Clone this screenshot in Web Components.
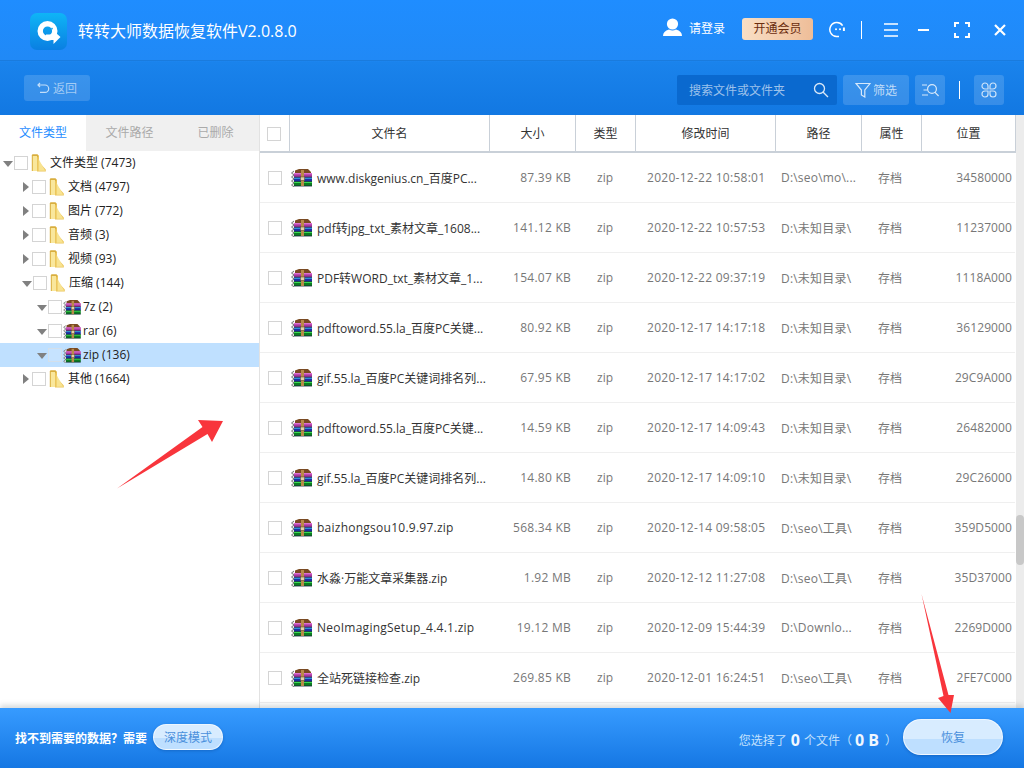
<!DOCTYPE html>
<html lang="zh">
<head>
<meta charset="utf-8">
<title>转转大师数据恢复软件</title>
<style>
    html, body {
        margin: 0;
        height: 100%;
        overflow: hidden;
    }

    body {
        font: 12px "Open Sans", "Noto Sans CJK SC", sans-serif;
        color: #333;
    }

    app-window {
        width: 1024px;
        height: 768px;
    }
</style>
</head>
<body>
<app-window>
    <app-header slot="header"></app-header>
    <side-tree slot="side"></side-tree>
    <file-table slot="main"></file-table>
    <app-footer slot="footer"></app-footer>
</app-window>

<script>
const rarIcon = (w = 21, h = 18) => `<svg width="${w}" height="${h}" viewBox="0 0 21 18" style="display:block;flex:none">
    <path d="M4 1.5 L8 0 H17 L20 3 V5 H4Z" fill="#7a4a22"/>
    <rect x="3" y="4" width="18" height="4.4" fill="#a8389f"/>
    <rect x="3" y="4" width="18" height="1.4" fill="#de6fd2"/>
    <rect x="3" y="8.4" width="18" height="4.2" fill="#1b2fa8"/>
    <rect x="3" y="8.4" width="18" height="1.3" fill="#3fb4ee"/>
    <rect x="3" y="12.6" width="18" height="4.4" fill="#0c7c20"/>
    <rect x="3" y="12.6" width="18" height="1.4" fill="#3bd850"/>
    <path d="M3 8.2H21M3 12.4H21M3 17H21" stroke="#10203a" stroke-width=".8"/>
    <path d="M3 2 L0.5 4 L3 6 L0.5 8 L3 10 L0.5 12 L3 14 L0.5 16 L3 18" fill="#e8e8e8" stroke="#555" stroke-width=".8"/>
    <rect x="10" y="1" width="3" height="16" fill="#b98a4a"/>
    <rect x="9.5" y="8" width="4" height="3.4" fill="#e4d2a8" stroke="#5a4020" stroke-width=".5"/>
</svg>`;

const folderIcon = `<svg width="15" height="18" viewBox="0 0 15 18" style="display:block;flex:none">
    <path d="M.8 1.5 Q.8 .3 2 .3 H6.5 L8 2 V17 H.8Z" fill="#d9ae3f"/>
    <path d="M1.8 2 H6 V17 H1.8Z" fill="#f9e79c"/>
    <path d="M6 3.5 L8 1.5 V8 L14.8 15.5 V17.5 H6Z" fill="#ecc65c"/>
    <path d="M7.6 5 L14.2 16.8 H7.6Z" fill="#f8e391"/>
</svg>`;

const checkStyle = `
    .check {
        box-sizing: border-box;
        width: 14px;
        height: 14px;
        flex: none;
        background: #fff;
        border: 1px solid #d4d4d4;
    }
`;

const headerTemplate = document.createElement('template');
headerTemplate.innerHTML = `
    <style>
        :host {
            display: block;
            height: 115px;
            color: #fff;
            background: linear-gradient(#1f8dff, #2089f6 60px, #1a83ec 62px, #1278e2);
        }

        svg {
            display: block;
            flex: none;
        }

        .title-bar {
            box-sizing: border-box;
            height: 61px;
            padding: 13px 18px 0 30px;
            display: flex;
            align-items: flex-start;
            border-bottom: 1px solid #1a7bdd;
        }

        .logo {
            width: 37px;
            height: 37px;
            border-radius: 7px;
            background: linear-gradient(#0fb5f6, #0a7fe2);
        }

        .title {
            margin: 7px auto 0 11px;
            font-size: 16px;
            line-height: 22px;
        }

        .login {
            display: flex;
            align-items: center;
            gap: 7px;
            margin: 5px 17px 0 0;
            height: 20px;
        }

        .login svg {
            margin-top: -3px;
        }

        .vip {
            width: 71px;
            height: 22px;
            margin: 5px 15px 0 0;
            text-align: center;
            line-height: 22px;
            color: #6a2c0e;
            border-radius: 3px;
            background: linear-gradient(90deg, #f9dfc5, #eebd98);
        }

        .sep {
            width: 1px;
            height: 18px;
            background: #fff;
            flex: none;
        }

        .tools {
            display: flex;
            align-items: center;
            height: 20px;
            margin-top: 7px;
        }

        .tool-bar {
            box-sizing: border-box;
            height: 54px;
            padding: 14px 20px 0 24px;
            display: flex;
            align-items: flex-start;
        }

        .back {
            box-sizing: border-box;
            width: 66px;
            height: 26px;
            margin-right: auto;
            display: flex;
            align-items: center;
            justify-content: center;
            gap: 3px;
            border-radius: 3px;
            background: rgba(255, 255, 255, .15);
            color: rgba(255, 255, 255, .55);
        }

        .search {
            box-sizing: border-box;
            width: 160px;
            height: 30px;
            padding: 0 8px 0 12px;
            display: flex;
            align-items: center;
            justify-content: space-between;
            border-radius: 2px;
            background: #0a69cf;
            color: rgba(255, 255, 255, .6);
        }

        .btn {
            box-sizing: border-box;
            height: 30px;
            margin-left: 6px;
            display: flex;
            align-items: center;
            justify-content: center;
            gap: 2px;
            border-radius: 3px;
            background: rgba(255, 255, 255, .15);
            color: rgba(255, 255, 255, .7);
        }

        .tool-sep {
            width: 1px;
            height: 18px;
            margin: 6px 14px 0 14px;
            background: #fff;
        }
    </style>
    <div class="title-bar">
        <div class="logo">
            <svg width="37" height="37" viewBox="0 0 37 37">
                <circle cx="17.5" cy="18" r="7.3" fill="none" stroke="#fff" stroke-width="5.4"/>
                <path d="M16 21.5 H22 V16.5 L30.5 24 L23.5 31 V27 H16Z" fill="#fff"/>
                <path d="M21.5 16.2 L22.5 15" stroke="#18a0ee" stroke-width="1.4"/>
            </svg>
        </div>
        <div class="title">转转大师数据恢复软件V2.0.8.0</div>
        <div class="login">
            <svg width="19" height="18" viewBox="0 0 19 18" fill="#fff">
                <circle cx="9.5" cy="6" r="5.6"/>
                <path d="M0 18 Q0 13 6 11.5 Q9.5 13.5 13 11.5 Q19 13 19 18Z"/>
            </svg>
            <span>请登录</span>
        </div>
        <div class="vip">开通会员</div>
        <div class="tools">
            <svg width="18" height="18" viewBox="0 0 18 18" fill="none" stroke="#fff" stroke-width="1.5" style="margin-right:15px">
                <path d="M14.6 4.6 A7 7 0 1 0 8.5 15.6 H11"/>
                <path d="M15.9 6.5 V10" stroke-width="2"/>
                <circle cx="8" cy="8.3" r="1" fill="#fff" stroke="none"/>
                <circle cx="12" cy="8.3" r="1" fill="#fff" stroke="none"/>
            </svg>
            <div class="sep"></div>
            <svg width="14" height="14" viewBox="0 0 14 14" stroke="#fff" stroke-width="1.6" style="margin-left:22px">
                <path d="M0 1H14M0 7H14M0 13H14"/>
            </svg>
            <svg width="11" height="2" viewBox="0 0 11 2" stroke="#fff" stroke-width="2" style="margin-left:20px">
                <path d="M0 1H11"/>
            </svg>
            <svg width="16" height="16" viewBox="0 0 16 16" fill="none" stroke="#fff" stroke-width="2" style="margin-left:25px">
                <path d="M1 5V1H5M11 1H15V5M15 11V15H11M5 15H1V11"/>
            </svg>
            <svg width="12" height="12" viewBox="0 0 12 12" stroke="#fff" stroke-width="2.2" style="margin-left:24px">
                <path d="M1 1L11 11M11 1L1 11"/>
            </svg>
        </div>
    </div>
    <div class="tool-bar">
        <div class="back">
            <svg width="13" height="12" viewBox="0 0 13 12" fill="none" stroke="rgba(255,255,255,.7)" stroke-width="1.2">
                <path d="M3 1 L1 3 L3 5M1 3 H8 A3.6 3.6 0 0 1 8 10.4 H3"/>
            </svg>
            <span>返回</span>
        </div>
        <div class="search">
            <span>搜索文件或文件夹</span>
            <svg width="16" height="16" viewBox="0 0 16 16" fill="none" stroke="rgba(255,255,255,.85)" stroke-width="1.3">
                <circle cx="6.5" cy="6.5" r="5"/>
                <path d="M10.2 10.2L15 15"/>
            </svg>
        </div>
        <div class="btn" style="width:66px">
            <svg width="16" height="16" viewBox="0 0 16 16" fill="none" stroke="rgba(255,255,255,.8)" stroke-width="1.2">
                <path d="M1 1.5H15L9.8 8V15L6.4 13V8Z"/>
            </svg>
            <span>筛选</span>
        </div>
        <div class="btn" style="width:30px">
            <svg width="17" height="14" viewBox="0 0 17 14" fill="none" stroke="rgba(255,255,255,.8)" stroke-width="1.2">
                <path d="M0 2H5M1.5 7H5M0 12H6"/>
                <circle cx="10" cy="6" r="4.4"/>
                <path d="M13 9.4L16.6 13"/>
            </svg>
        </div>
        <div class="tool-sep"></div>
        <div class="btn" style="width:30px;margin-left:0">
            <svg width="16" height="16" viewBox="0 0 16 16" fill="none" stroke="rgba(255,255,255,.75)" stroke-width="1.2">
                <path d="M7 7H4a3 3 0 1 1 3-3Z"/>
                <path d="M9 7V4a3 3 0 1 1 3 3Z"/>
                <path d="M7 9V12a3 3 0 1 1-3-3Z"/>
                <path d="M9 9H12a3 3 0 1 1-3 3Z"/>
            </svg>
        </div>
    </div>
`;

window.customElements.define(
    "app-header",
    class extends HTMLElement {
        constructor() {
            super();
            this.attachShadow({mode: 'open'});
            this.shadowRoot.appendChild(headerTemplate.content.cloneNode(true));
        }
    }
);

const treeRowTemplate = document.createElement('template');
treeRowTemplate.innerHTML = `
    <style>
        ${checkStyle}

        :host {
            display: flex;
            align-items: center;
            box-sizing: border-box;
            height: 24px;
            color: #222;
            white-space: nowrap;
        }

        :host([selected]) {
            background: #bfe0ff;
        }

        :host([selected]) .check {
            background: rgba(255, 255, 255, .12);
            border-color: #d3dfea;
        }

        .arrow {
            width: 0;
            height: 0;
            flex: none;
        }

        .arrow.closed {
            margin: 0 3px 0 1px;
            border-left: 6px solid #808080;
            border-top: 5px solid transparent;
            border-bottom: 5px solid transparent;
        }

        .arrow.open {
            margin: 2px 1px 0 0;
            border-top: 6px solid #808080;
            border-left: 5px solid transparent;
            border-right: 5px solid transparent;
        }

        .icon {
            margin-left: 3px;
        }

        .text {
            margin: -2px 0 0 4px;
        }

        :host([kind="rar"]) .icon {
            margin-left: 1px;
        }

        :host([kind="rar"]) .text {
            margin-left: 2px;
        }
    </style>
    <span class="arrow"></span>
    <span class="check"></span>
    <span class="icon"></span>
    <span class="text"><slot></slot></span>
`;

window.customElements.define(
    "tree-row",
    class extends HTMLElement {
        constructor() {
            super();
            this.attachShadow({mode: 'open'});
            this.shadowRoot.appendChild(treeRowTemplate.content.cloneNode(true));
        }

        connectedCallback() {
            const root = this.shadowRoot;
            const level = Number(this.getAttribute("level") || 0);
            this.style.paddingLeft = [3, 22, 37][level] + "px";
            root.querySelector(".arrow").classList.add(this.hasAttribute("open") ? "open" : "closed");
            root.querySelector(".icon").innerHTML = this.getAttribute("kind") === "rar" ? rarIcon(18, 15) : folderIcon;
        }
    }
);

const sideTemplate = document.createElement('template');
sideTemplate.innerHTML = `
    <style>
        :host {
            display: block;
            width: 260px;
            box-sizing: border-box;
            border-right: 1px solid #e2e2e2;
            background: #fff;
        }

        .tabs {
            display: flex;
            height: 36px;
            line-height: 36px;
            text-align: center;
            color: #aaa;
            background: #f0f0f0;
        }

        .tabs div {
            width: 86px;
        }

        .tabs .active {
            color: #1f8dff;
            background: #fff;
        }

        .tabs div:nth-child(2) {
            width: 87px;
        }

        .tabs div:nth-child(3) {
            width: 85px;
        }
    </style>
    <div class="tabs">
        <div class="active">文件类型</div>
        <div>文件路径</div>
        <div>已删除</div>
    </div>
    <tree-row level="0" open>文件类型 (7473)</tree-row>
    <tree-row level="1">文档 (4797)</tree-row>
    <tree-row level="1">图片 (772)</tree-row>
    <tree-row level="1">音频 (3)</tree-row>
    <tree-row level="1">视频 (93)</tree-row>
    <tree-row level="1" open>压缩 (144)</tree-row>
    <tree-row level="2" open kind="rar">7z (2)</tree-row>
    <tree-row level="2" open kind="rar">rar (6)</tree-row>
    <tree-row level="2" open kind="rar" selected>zip (136)</tree-row>
    <tree-row level="1">其他 (1664)</tree-row>
`;

window.customElements.define(
    "side-tree",
    class extends HTMLElement {
        constructor() {
            super();
            this.attachShadow({mode: 'open'});
            this.shadowRoot.appendChild(sideTemplate.content.cloneNode(true));
        }
    }
);

const columns = "29px 200px 86px 60px 140px 86px 60px 94px";

const fileRowTemplate = document.createElement('template');
fileRowTemplate.innerHTML = `
    <style>
        ${checkStyle}

        :host {
            display: grid;
            grid-template-columns: ${columns};
            align-items: center;
            box-sizing: border-box;
            height: 50px;
            border-bottom: 1px solid #efefef;
            color: #777;
            white-space: nowrap;
        }

        .check {
            margin-left: 8px;
        }

        .name {
            display: flex;
            align-items: center;
            gap: 4px;
            padding-left: 3px;
            color: #333;
        }

        .name svg {
            margin-left: -1px;
            margin-right: 1px;
        }

        .size {
            text-align: right;
            padding-right: 4px;
            letter-spacing: .25px;
        }

        .type, .attr {
            text-align: center;
        }

        .attr {
            padding-right: 2px;
        }

        .time {
            padding-left: 12px;
            letter-spacing: .27px;
        }

        .path {
            padding-left: 6px;
            letter-spacing: .2px;
        }

        .pos {
            text-align: right;
            padding-right: 3px;
            letter-spacing: .1px;
        }
    </style>
    <span class="check"></span>
    <div class="name">${rarIcon()}<span class="label"><slot></slot></span></div>
    <div class="size"></div>
    <div class="type">zip</div>
    <div class="time"></div>
    <div class="path"></div>
    <div class="attr">存档</div>
    <div class="pos"></div>
`;

window.customElements.define(
    "file-row",
    class extends HTMLElement {
        constructor() {
            super();
            this.attachShadow({mode: 'open'});
            this.shadowRoot.appendChild(fileRowTemplate.content.cloneNode(true));
        }

        connectedCallback() {
            for (const name of ["size", "time", "path", "pos"]) {
                this.shadowRoot.querySelector("." + name).textContent = this.getAttribute(name);
            }
            // latin runs are a little wider in the original font
            if (/^[\x00-\x7f]+$/.test(this.textContent)) {
                this.shadowRoot.querySelector(".label").style.letterSpacing = ".25px";
            }
        }
    }
);

const files = [
    ["www.diskgenius.cn_百度PC...", "87.39 KB", "2020-12-22 10:58:01", "D:\\seo\\mo\\...", "34580000"],
    ["pdf转jpg_txt_素材文章_1608...", "141.12 KB", "2020-12-22 10:57:53", "D:\\未知目录\\", "11237000"],
    ["PDF转WORD_txt_素材文章_1...", "154.07 KB", "2020-12-22 09:37:19", "D:\\未知目录\\", "1118A000"],
    ["pdftoword.55.la_百度PC关键...", "80.92 KB", "2020-12-17 14:17:18", "D:\\未知目录\\", "36129000"],
    ["gif.55.la_百度PC关键词排名列...", "67.95 KB", "2020-12-17 14:17:02", "D:\\未知目录\\", "29C9A000"],
    ["pdftoword.55.la_百度PC关键...", "14.59 KB", "2020-12-17 14:09:43", "D:\\未知目录\\", "26482000"],
    ["gif.55.la_百度PC关键词排名列...", "14.80 KB", "2020-12-17 14:09:10", "D:\\未知目录\\", "29C26000"],
    ["baizhongsou10.9.97.zip", "568.34 KB", "2020-12-14 09:58:05", "D:\\seo\\工具\\", "359D5000"],
    ["水淼·万能文章采集器.zip", "1.92 MB", "2020-12-12 11:27:08", "D:\\seo\\工具\\", "35D37000"],
    ["NeoImagingSetup_4.4.1.zip", "19.12 MB", "2020-12-09 15:44:39", "D:\\Downlo...", "2269D000"],
    ["全站死链接检查.zip", "269.85 KB", "2020-12-01 16:24:51", "D:\\seo\\工具\\", "2FE7C000"],
];

const tableTemplate = document.createElement('template');
tableTemplate.innerHTML = `
    <style>
        ${checkStyle}

        :host {
            display: block;
            position: relative;
            flex: 1;
            overflow: hidden;
            background: #fff;
        }

        .head {
            display: grid;
            grid-template-columns: 30px 200px 86px 60px 140px 86px 60px 94px;
            width: 756px;
            height: 38px;
            box-sizing: border-box;
            border-bottom: 2px solid #c9d0d8;
            line-height: 37px;
            text-align: center;
            color: #333;
        }

        .head > div {
            box-sizing: border-box;
            border-right: 1px solid #c9d0d8;
        }

        .head .check {
            margin: 12px 0 0 7px;
        }

        .head .box {
            display: flex;
        }

        .rows {
            width: 755px;
        }

        .track {
            position: absolute;
            top: 0;
            right: 0;
            bottom: 0;
            width: 8px;
            background: #ececec;
        }

        .thumb {
            position: absolute;
            top: 400px;
            left: 0;
            width: 8px;
            height: 50px;
            background: #c8c8c8;
            border-radius: 4px;
        }
    </style>
    <div class="head">
        <div class="box"><span class="check"></span></div>
        <div>文件名</div>
        <div>大小</div>
        <div>类型</div>
        <div>修改时间</div>
        <div>路径</div>
        <div>属性</div>
        <div>位置</div>
    </div>
    <div class="rows"></div>
    <div class="track"><div class="thumb"></div></div>
`;

window.customElements.define(
    "file-table",
    class extends HTMLElement {
        constructor() {
            super();
            this.attachShadow({mode: 'open'});
            this.shadowRoot.appendChild(tableTemplate.content.cloneNode(true));
            const rows = this.shadowRoot.querySelector(".rows");
            for (const [name, size, time, path, pos] of files) {
                const row = document.createElement("file-row");
                row.textContent = name;
                row.setAttribute("size", size);
                row.setAttribute("time", time);
                row.setAttribute("path", path);
                row.setAttribute("pos", pos);
                rows.appendChild(row);
            }
        }
    }
);

const footerTemplate = document.createElement('template');
footerTemplate.innerHTML = `
    <style>
        :host {
            display: flex;
            align-items: center;
            box-sizing: border-box;
            height: 60px;
            padding: 0 21px 0 15px;
            position: relative;
            color: #fff;
            background: linear-gradient(#379bff, #1577e3);
            box-shadow: 0 -3px 5px rgba(100, 110, 120, .25);
        }

        .ask {
            font-weight: 700;
            margin-right: 6px;
        }

        .pill {
            display: flex;
            align-items: center;
            justify-content: center;
            box-sizing: border-box;
            border-radius: 18px;
            color: #4a90dc;
            border: 1px solid rgba(255, 255, 255, .7);
            background: linear-gradient(#d8ecff 55%, #bedfff 56%);
            box-shadow: 0 1px 3px rgba(0, 50, 120, .3);
        }

        .deep {
            width: 70px;
            height: 26px;
            margin-top: -2px;
        }

        .picked {
            margin: 3px 6px 0 auto;
            color: #c4e1fd;
            display: flex;
            align-items: center;
        }

        .picked b {
            font-size: 16px;
            color: #f0f7ff;
            margin: 0 4px;
        }

        .picked b + span + b {
            margin: 0 6px 0 3px;
        }

        .restore {
            width: 100px;
            height: 36px;
            margin-top: -2px;
        }
    </style>
    <span class="ask">找不到需要的数据？需要</span>
    <div class="pill deep">深度模式</div>
    <div class="picked"><span>您选择了</span><b>0</b><span>个文件（</span><b>0 B</b><span>）</span></div>
    <div class="pill restore">恢复</div>
`;

window.customElements.define(
    "app-footer",
    class extends HTMLElement {
        constructor() {
            super();
            this.attachShadow({mode: 'open'});
            this.shadowRoot.appendChild(footerTemplate.content.cloneNode(true));
        }
    }
);

const windowTemplate = document.createElement('template');
windowTemplate.innerHTML = `
    <style>
        :host {
            display: flex;
            flex-direction: column;
            position: relative;
            overflow: hidden;
        }

        .body {
            flex: 1;
            display: flex;
            min-height: 0;
        }

        .arrows {
            position: absolute;
            left: 0;
            top: 0;
            pointer-events: none;
        }
    </style>
    <slot name="header"></slot>
    <div class="body">
        <slot name="side"></slot>
        <slot name="main"></slot>
    </div>
    <slot name="footer"></slot>
    <svg class="arrows" width="1024" height="768" viewBox="0 0 1024 768" fill="#f8353c">
        <path d="M117 488.5 L202.5 427 L198 420 L223 421 L212 442 L207.5 434Z"/>
        <path d="M921.5 594 L943.5 696 L938 698 L950.5 713 L954 695 L948.5 695Z"/>
    </svg>
`;

window.customElements.define(
    "app-window",
    class extends HTMLElement {
        constructor() {
            super();
            this.attachShadow({mode: 'open'});
            this.shadowRoot.appendChild(windowTemplate.content.cloneNode(true));
        }
    }
);
</script>
</body>
</html>
